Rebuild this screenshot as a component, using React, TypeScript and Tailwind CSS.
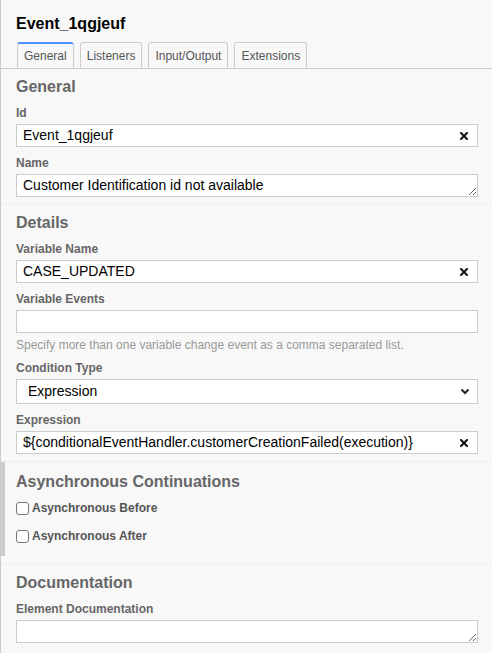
import React from 'react';

const ClearIcon = () => (
  <svg width="8" height="8" viewBox="0 0 8 8" className="shrink-0">
    <path d="M1 1 L7 7 M7 1 L1 7" stroke="#111" strokeWidth="2" strokeLinecap="square" />
  </svg>
);

const Chevron = () => (
  <svg width="10" height="7" viewBox="0 0 10 7" className="shrink-0">
    <path d="M1.5 1.5 L5 5 L8.5 1.5" stroke="#222" strokeWidth="2" fill="none" />
  </svg>
);

const Label: React.FC<{ text: string }> = ({ text }) => (
  <div className="h-4 mb-[3px] text-[12px] leading-4 font-bold text-[#666]">{text}</div>
);

const TextInput: React.FC<{ value?: string; clear?: boolean }> = ({ value = '', clear }) => (
  <div className="h-[23px] flex items-center bg-white border border-[#ccc] pl-[6px] pr-[9px] text-[14px] text-black">
    <span className="flex-1 truncate">{value}</span>
    {clear && <ClearIcon />}
  </div>
);

const TextArea: React.FC<{ value?: string }> = ({ value = '' }) => (
  <textarea
    readOnly
    value={value}
    rows={1}
    className="block w-full h-[23px] bg-white border border-[#ccc] px-[6px] py-[1px] text-[14px] leading-[18px] text-black resize-y outline-none overflow-hidden"
  />
);

const Heading: React.FC<{ text: string }> = ({ text }) => (
  <div className="h-5 mb-2 text-[16px] leading-5 font-bold text-[#666]">{text}</div>
);

const Checkbox: React.FC<{ label: string }> = ({ label }) => (
  <div className="flex items-center h-4">
    <span className="w-[13px] h-[13px] rounded-[3px] border border-[#777] bg-white mr-[3px]" />
    <span className="text-[12px] font-bold text-[#555]">{label}</span>
  </div>
);

const tabs = ['General', 'Listeners', 'Input/Output', 'Extensions'];

export default function App() {
  return (
    <div
      className="w-[492px] h-[653px] overflow-hidden bg-[#f8f8f8] border-l border-[#ccc]"
      style={{ fontFamily: '"Liberation Sans", Arial, sans-serif' }}
    >
      <div className="pl-[15px] pt-[14px] h-5 box-content text-[16px] leading-5 font-bold text-black">Event_1qgjeuf</div>

      <div className="mt-2 flex items-end gap-[6px] pl-4 border-b border-[#ccc]">
        {tabs.map((t, i) => (
          <div
            key={t}
            className={
              'h-[26px] px-[6px] flex items-center rounded-t-[3px] border-x border-t text-[12px] text-[#555] ' +
              (i === 0 ? 'border-t-2 border-t-[#4d90fe] border-x-[#ccc] bg-[#f8f8f8]' : 'border-[#ccc] bg-[#f8f8f8]')
            }
          >
            {t}
          </div>
        ))}
      </div>

      <div className="pl-[15px] pr-[14px] pt-2 pb-[7px] border-b border-[#eee]">
        <Heading text="General" />
        <Label text="Id" />
        <TextInput value="Event_1qgjeuf" clear />
        <div className="mt-2">
          <Label text="Name" />
          <TextArea value="Customer Identification id not available" />
        </div>
      </div>

      <div className="pl-[15px] pr-[14px] pt-2 pb-[7px] border-b border-[#eee]">
        <Heading text="Details" />
        <Label text="Variable Name" />
        <TextInput value="CASE_UPDATED" clear />
        <div className="mt-2">
          <Label text="Variable Events" />
          <TextInput />
          <div className="mt-1 h-4 text-[12px] leading-4 text-[#999]">
            Specify more than one variable change event as a comma separated list.
          </div>
        </div>
        <div className="mt-[7px]">
          <Label text="Condition Type" />
          <div className="h-[25px] flex items-center bg-white border border-[#ccc] pl-[11px] pr-[7px] text-[14px] text-black">
            <span className="flex-1">Expression</span>
            <Chevron />
          </div>
        </div>
        <div className="mt-2">
          <Label text="Expression" />
          <TextInput value="${conditionalEventHandler.customerCreationFailed(execution)}" clear />
        </div>
      </div>

      <div className="border-b border-[#eee]">
        <div className="-ml-px border-l-[5px] border-[#ccc] pl-[11px] pr-[14px] pt-[10px] pb-[12px]">
          <Heading text="Asynchronous Continuations" />
          <div className="mt-[6px] flex flex-col gap-3">
            <Checkbox label="Asynchronous Before" />
            <Checkbox label="Asynchronous After" />
          </div>
        </div>
        <div className="h-[7px]" />
      </div>

      <div className="pl-[15px] pr-[14px] pt-[9px] pb-2">
        <Heading text="Documentation" />
        <Label text="Element Documentation" />
        <TextArea />
      </div>
    </div>
  );
}
